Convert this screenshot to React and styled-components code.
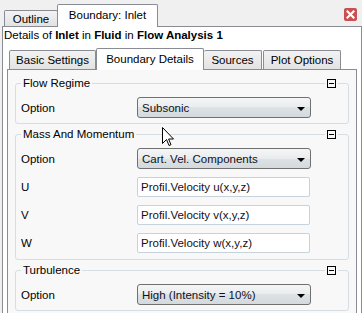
import React from 'react'
import styled, { createGlobalStyle } from 'styled-components'

const GlobalStyle = createGlobalStyle`
  html, body {
    margin: 0;
    padding: 0;
    background: #f0f0f0;
  }
  body {
    font-family: "Liberation Sans", Arial, sans-serif;
    font-size: 11.5px;
    color: #000;
  }
`

const Window = styled.div`
  position: relative;
  width: 362px;
  height: 313px;
  overflow: hidden;
  background: #f0f0f0;
  display: flex;
  flex-direction: column;
`

const TopBar = styled.div`
  height: 26px;
  display: flex;
  align-items: flex-end;
  padding-left: 4px;
  flex-shrink: 0;
`

const TopTab = styled.div`
  box-sizing: border-box;
  width: ${p => p.w}px;
  height: ${p => (p.active ? 23 : 16)}px;
  margin-bottom: ${p => (p.active ? -1 : 0)}px;
  margin-left: ${p => (p.active ? -1 : 0)}px;
  border: 1px solid #898c95;
  border-bottom: none;
  border-radius: 2px 2px 0 0;
  background: ${p => (p.active ? '#fff' : 'linear-gradient(#f3f3f3, #e2e2e2)')};
  position: relative;
  z-index: ${p => (p.active ? 1 : 0)};
  display: flex;
  align-items: center;
  justify-content: center;
  padding-bottom: ${p => (p.active ? 2 : 0)}px;
`

const CloseButton = styled.div`
  align-self: flex-start;
  margin: 8px 5px 0 auto;
  width: 13px;
  height: 13px;
  border-radius: 2px;
  background: #c75050;
  display: flex;
  align-items: center;
  justify-content: center;
`

const Page = styled.div`
  flex: 1;
  margin-left: 2px;
  border: 1px solid #898c95;
  border-bottom: none;
  background: #fff;
  display: flex;
  flex-direction: column;
  min-height: 0;
`

const Details = styled.div`
  height: 21px;
  line-height: 17px;
  padding-left: 1px;
  flex-shrink: 0;
  white-space: nowrap;
`

const TabRow = styled.div`
  height: 21px;
  display: flex;
  align-items: flex-end;
  padding-left: 6px;
  flex-shrink: 0;
`

const Tab = styled.div`
  box-sizing: border-box;
  width: ${p => p.w}px;
  height: ${p => (p.active ? 22 : 19)}px;
  margin-bottom: ${p => (p.active ? -1 : 0)}px;
  margin-right: ${p => (p.gap ? 1 : 0)}px;
  border: 1px solid #898c95;
  border-bottom: none;
  border-left: ${p => (p.noLeft ? 'none' : '1px solid #898c95')};
  border-radius: 2px 2px 0 0;
  background: ${p => (p.active ? '#fff' : 'linear-gradient(#f2f2f2, #e3e3e3)')};
  position: relative;
  z-index: ${p => (p.active ? 1 : 0)};
  display: flex;
  align-items: center;
  justify-content: center;
  padding-bottom: ${p => (p.active ? 2 : 0)}px;
  white-space: nowrap;
`

const Panel = styled.div`
  flex: 1;
  margin: 0 4px;
  border: 1px solid #898c95;
  border-bottom: none;
  background: #f8f8f8;
  padding: 13px 7px 0;
  display: flex;
  flex-direction: column;
  gap: 10px;
  min-height: 0;
`

const Group = styled.div`
  border: 1px solid #d6dde3;
  border-radius: 3px;
  flex-shrink: 0;
`

const GroupHeader = styled.div`
  height: 15px;
  margin-top: -8px;
  display: flex;
  align-items: center;
  justify-content: space-between;
  padding: 0 10px 0 5px;
`

const GroupTitle = styled.span`
  background: #f8f8f8;
  padding: 0 2px;
  line-height: 15px;
`

const Collapse = styled.span`
  background: #f8f8f8;
  padding: 0 2px;
  display: flex;
  align-items: center;
  height: 11px;
`

const CollapseBox = styled.span`
  box-sizing: border-box;
  width: 9px;
  height: 9px;
  border: 1px solid #000;
  display: flex;
  align-items: center;
  justify-content: center;
  &::after {
    content: '';
    width: 5px;
    height: 1px;
    background: #000;
  }
`

const GroupBody = styled.div`
  padding: 6px 0 ${p => p.pb}px 5px;
  display: flex;
  flex-direction: column;
  gap: 8px;
`

const Row = styled.div`
  display: grid;
  grid-template-columns: 116px auto;
  align-items: center;
`

const Combo = styled.div`
  box-sizing: border-box;
  width: 174px;
  height: 21px;
  border: 1px solid #707070;
  border-radius: 3px;
  background: linear-gradient(#f4f5f6, #e9ecee 50%, #dde2e5 50%, #d3d9dd);
  display: flex;
  align-items: center;
  justify-content: space-between;
  padding: 0 5px 0 4px;
  color: #101020;
  white-space: nowrap;
`

const Arrow = styled.span`
  width: 0;
  height: 0;
  border-left: 4px solid transparent;
  border-right: 4px solid transparent;
  border-top: 4px solid #000;
  margin-top: 2px;
`

const Field = styled.div`
  box-sizing: border-box;
  width: 173px;
  height: 20px;
  border: 1px solid #c7d2db;
  border-radius: 2px;
  background: #fff;
  display: flex;
  align-items: center;
  padding-left: 3px;
  color: #101020;
  white-space: nowrap;
`

const Cursor = styled.svg`
  position: absolute;
  left: 162px;
  top: 127px;
`

const GroupBox = ({ title, pb = 5, children }) => (
  <Group>
    <GroupHeader>
      <GroupTitle>{title}</GroupTitle>
      <Collapse>
        <CollapseBox />
      </Collapse>
    </GroupHeader>
    <GroupBody pb={pb}>{children}</GroupBody>
  </Group>
)

const App = () => {
  return (
    <Window>
      <GlobalStyle />
      <TopBar>
        <TopTab w={54}>Outline</TopTab>
        <TopTab w={101} active>Boundary: Inlet</TopTab>
        <CloseButton>
          <svg width="9" height="9" viewBox="0 0 9 9">
            <path d="M1.5 1.5 L7.5 7.5 M7.5 1.5 L1.5 7.5" stroke="#fff" strokeWidth="2.2" strokeLinecap="square" />
          </svg>
        </CloseButton>
      </TopBar>
      <Page>
        <Details>
          Details of <b>Inlet</b> in <b>Fluid</b> in <b>Flow Analysis 1</b>
        </Details>
        <TabRow>
          <Tab w={87}>Basic Settings</Tab>
          <Tab w={108} active>Boundary Details</Tab>
          <Tab w={58} noLeft gap>Sources</Tab>
          <Tab w={78}>Plot Options</Tab>
        </TabRow>
        <Panel>
          <GroupBox title="Flow Regime">
            <Row>
              <span>Option</span>
              <Combo>Subsonic<Arrow /></Combo>
            </Row>
          </GroupBox>
          <GroupBox title="Mass And Momentum" pb={6}>
            <Row>
              <span>Option</span>
              <Combo>Cart. Vel. Components<Arrow /></Combo>
            </Row>
            <Row>
              <span>U</span>
              <Field>Profil.Velocity u(x,y,z)</Field>
            </Row>
            <Row>
              <span>V</span>
              <Field>Profil.Velocity v(x,y,z)</Field>
            </Row>
            <Row>
              <span>W</span>
              <Field>Profil.Velocity w(x,y,z)</Field>
            </Row>
          </GroupBox>
          <GroupBox title="Turbulence">
            <Row>
              <span>Option</span>
              <Combo>High (Intensity = 10%)<Arrow /></Combo>
            </Row>
          </GroupBox>
        </Panel>
      </Page>
      <Cursor width="12" height="20" viewBox="0 0 12 20">
        <path
          d="M0.5 0.5 L0.5 16.5 L4.5 12.5 L7 18.5 L9 17.7 L6.6 12 L11.5 12 Z"
          fill="#fff"
          stroke="#000"
          strokeWidth="1"
          strokeLinejoin="miter"
        />
      </Cursor>
    </Window>
  )
}

export default App
